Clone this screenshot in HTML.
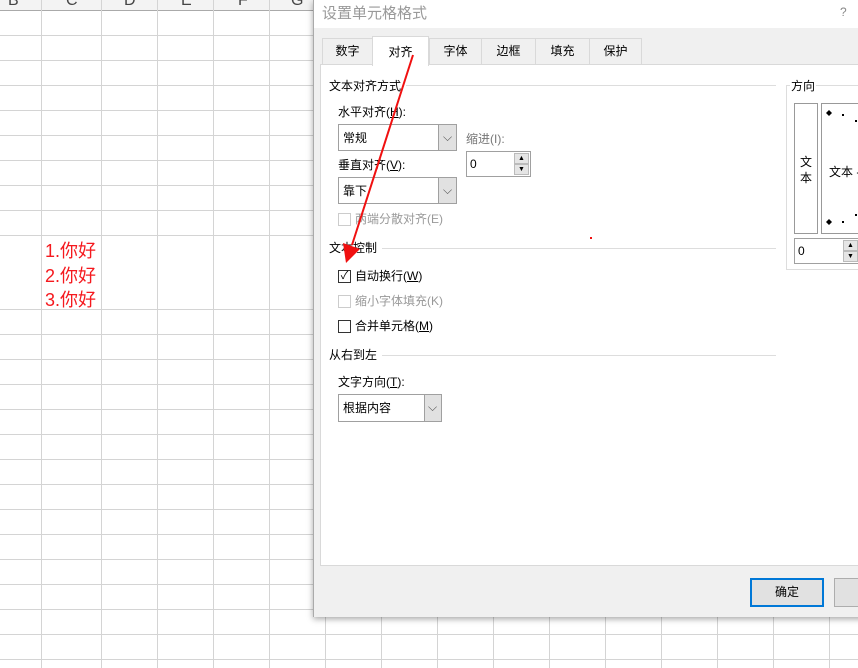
<!DOCTYPE html>
<html><head><meta charset="utf-8"><style>
*{margin:0;padding:0;box-sizing:border-box}
body{width:858px;height:668px;overflow:hidden;background:#fff;position:relative;font-family:"Liberation Sans","Noto Sans CJK SC",sans-serif;font-size:12px;color:#000}
.a{position:absolute}
.hl{position:absolute;height:1px;background:#d4d4d4}
.vl{position:absolute;width:1px;background:#d4d4d4}
.t{position:absolute;white-space:nowrap;line-height:14px}
.sel{position:absolute;background:#fff;border:1px solid #a0a0a0}
.sel .dd{position:absolute;right:0;top:0;bottom:0;width:18px;background:#e1e1e1;border-left:1px solid #a0a0a0}
.cb{position:absolute;width:13px;height:13px;border:1px solid #333;background:#fff}
.cb.d{border-color:#ccc}
.tab{position:absolute;top:38px;height:26px;border:1px solid #d9d9d9;border-bottom:none;text-align:center;line-height:24px;font-size:12px;background:#f0f0f0}
.h{position:absolute;top:-8px;font-size:16px;line-height:18px;color:#444}
</style></head><body>
<div class="a" style="left:0;top:0;width:313px;height:10px;background:#f3f3f3"></div>
<div class="a" style="left:0;top:10px;width:313px;height:1px;background:#aaa"></div>
<div class="h" style="left:8px">B</div>
<div class="h" style="left:66px">C</div>
<div class="h" style="left:124px">D</div>
<div class="h" style="left:181px">E</div>
<div class="h" style="left:238px">F</div>
<div class="h" style="left:291px">G</div>
<div class="vl" style="left:41px;top:0;height:668px"></div>
<div class="vl" style="left:101px;top:0;height:668px"></div>
<div class="vl" style="left:157px;top:0;height:668px"></div>
<div class="vl" style="left:213px;top:0;height:668px"></div>
<div class="vl" style="left:269px;top:0;height:668px"></div>
<div class="vl" style="left:325px;top:617px;height:51px"></div>
<div class="vl" style="left:381px;top:617px;height:51px"></div>
<div class="vl" style="left:437px;top:617px;height:51px"></div>
<div class="vl" style="left:493px;top:617px;height:51px"></div>
<div class="vl" style="left:549px;top:617px;height:51px"></div>
<div class="vl" style="left:605px;top:617px;height:51px"></div>
<div class="vl" style="left:661px;top:617px;height:51px"></div>
<div class="vl" style="left:717px;top:617px;height:51px"></div>
<div class="vl" style="left:773px;top:617px;height:51px"></div>
<div class="vl" style="left:829px;top:617px;height:51px"></div>
<div class="hl" style="left:0;top:35px;width:313px"></div>
<div class="hl" style="left:0;top:60px;width:313px"></div>
<div class="hl" style="left:0;top:85px;width:313px"></div>
<div class="hl" style="left:0;top:110px;width:313px"></div>
<div class="hl" style="left:0;top:135px;width:313px"></div>
<div class="hl" style="left:0;top:160px;width:313px"></div>
<div class="hl" style="left:0;top:185px;width:313px"></div>
<div class="hl" style="left:0;top:210px;width:313px"></div>
<div class="hl" style="left:0;top:235px;width:313px"></div>
<div class="hl" style="left:0;top:309px;width:313px"></div>
<div class="hl" style="left:0;top:334px;width:313px"></div>
<div class="hl" style="left:0;top:359px;width:313px"></div>
<div class="hl" style="left:0;top:384px;width:313px"></div>
<div class="hl" style="left:0;top:409px;width:313px"></div>
<div class="hl" style="left:0;top:434px;width:313px"></div>
<div class="hl" style="left:0;top:459px;width:313px"></div>
<div class="hl" style="left:0;top:484px;width:313px"></div>
<div class="hl" style="left:0;top:509px;width:313px"></div>
<div class="hl" style="left:0;top:534px;width:313px"></div>
<div class="hl" style="left:0;top:559px;width:313px"></div>
<div class="hl" style="left:0;top:584px;width:313px"></div>
<div class="hl" style="left:0;top:609px;width:313px"></div>
<div class="hl" style="left:0;top:634px;width:858px"></div>
<div class="hl" style="left:0;top:659px;width:858px"></div>
<div class="t" style="left:45px;top:239px;font-size:18px;line-height:24.5px;color:#f5191e">1.你好<br>2.你好<br>3.你好</div>
<div class="a" style="left:313px;top:0;width:560px;height:617px;background:#f0f0f0;border-left:1px solid #aaa;box-shadow:0 2px 6px rgba(0,0,0,.35)"></div>
<div class="a" style="left:314px;top:0;width:544px;height:28px;background:#fff"></div>
<div class="t" style="left:322px;top:5px;font-size:15px;line-height:18px;color:#999">设置单元格格式</div>
<div class="t" style="left:840px;top:5px;font-size:12px;color:#888">?</div>
<div class="a" style="left:320px;top:64px;width:545px;height:502px;background:#fff;border:1px solid #d9d9d9"></div>
<div class="tab" style="left:322px;width:51px">数字</div>
<div class="tab" style="left:481px;width:55px">边框</div>
<div class="tab" style="left:429px;width:53px">字体</div>
<div class="tab" style="left:535px;width:55px">填充</div>
<div class="tab" style="left:589px;width:53px">保护</div>
<div class="tab" style="left:372px;top:36px;height:30px;width:57px;background:#fff;line-height:30px;border-color:#d9d9d9">对齐</div>
<div class="t" style="left:329px;top:79px">文本对齐方式</div>
<div class="hl" style="left:406px;top:85px;width:370px;background:#ddd"></div>
<div class="t" style="left:338px;top:105px">水平对齐(<u>H</u>):</div>
<div class="sel" style="left:338px;top:124px;width:119px;height:27px"><div class="dd"></div><div class="t" style="left:4px;top:6px">常规</div><div class="t" style="left:104px;top:5px;color:#555">⌵</div></div>
<div class="t" style="left:466px;top:132px;color:#777">缩进(I):</div>
<div class="sel" style="left:466px;top:151px;width:65px;height:26px"><div class="t" style="left:3px;top:5px">0</div>
<div class="a" style="left:47px;top:1px;width:15px;height:11px;background:#e5e5e5;border:1px solid #bbb;font-size:7px;text-align:center;line-height:9px">▲</div>
<div class="a" style="left:47px;top:12px;width:15px;height:11px;background:#e5e5e5;border:1px solid #bbb;font-size:7px;text-align:center;line-height:9px">▼</div></div>
<div class="t" style="left:338px;top:158px">垂直对齐(<u>V</u>):</div>
<div class="sel" style="left:338px;top:177px;width:119px;height:27px"><div class="dd"></div><div class="t" style="left:4px;top:6px">靠下</div><div class="t" style="left:104px;top:5px;color:#555">⌵</div></div>
<div class="cb d" style="left:338px;top:213px"></div>
<div class="t" style="left:355px;top:212px;color:#999">两端分散对齐(E)</div>
<div class="t" style="left:329px;top:241px">文本控制</div>
<div class="hl" style="left:382px;top:248px;width:394px;background:#ddd"></div>
<div class="cb" style="left:338px;top:270px;font-size:11px;line-height:11px;text-align:center">✓</div>
<div class="t" style="left:355px;top:269px">自动换行(<u>W</u>)</div>
<div class="cb d" style="left:338px;top:295px"></div>
<div class="t" style="left:355px;top:294px;color:#999">缩小字体填充(K)</div>
<div class="cb" style="left:338px;top:320px"></div>
<div class="t" style="left:355px;top:319px">合并单元格(<u>M</u>)</div>
<div class="t" style="left:329px;top:348px">从右到左</div>
<div class="hl" style="left:382px;top:355px;width:394px;background:#ddd"></div>
<div class="t" style="left:338px;top:375px">文字方向(<u>T</u>):</div>
<div class="sel" style="left:338px;top:394px;width:104px;height:28px"><div class="dd" style="width:17px"></div><div class="t" style="left:4px;top:6px">根据内容</div><div class="t" style="left:89px;top:5px;color:#555">⌵</div></div>
<div class="a" style="left:786px;top:85px;width:80px;height:185px;border:1px solid #ddd"></div>
<div class="t" style="left:790px;top:79px;background:#fff;padding:0 1px">方向</div>
<div class="a" style="left:794px;top:103px;width:24px;height:131px;border:1px solid #999"></div>
<div class="t" style="left:800px;top:154px;line-height:16px">文<br>本</div>
<div class="a" style="left:821px;top:103px;width:45px;height:131px;border:1px solid #999"></div>
<div class="t" style="left:829px;top:165px">文本 -</div>
<div class="sel" style="left:794px;top:238px;width:70px;height:26px"><div class="t" style="left:3px;top:5px">0</div>
<div class="a" style="left:48px;top:1px;width:15px;height:11px;background:#e5e5e5;border:1px solid #bbb;font-size:7px;text-align:center;line-height:9px">▲</div>
<div class="a" style="left:48px;top:12px;width:15px;height:11px;background:#e5e5e5;border:1px solid #bbb;font-size:7px;text-align:center;line-height:9px">▼</div></div>
<div class="a" style="left:750px;top:578px;width:74px;height:29px;background:#e1e1e1;border:2px solid #0078d7;text-align:center;line-height:25px">确定</div>
<div class="a" style="left:834px;top:578px;width:40px;height:29px;background:#e1e1e1;border:1px solid #adadad"></div>
<svg class="a" style="left:0;top:0" width="858" height="668">
<polygon points="829,110 832,113 829,116 826,113" fill="#000"/>
<rect x="842" y="114" width="2" height="2" fill="#000"/><rect x="855" y="120" width="2" height="2" fill="#000"/>
<polygon points="829,219 832,222 829,225 826,222" fill="#000"/>
<rect x="842" y="221" width="2" height="2" fill="#000"/><rect x="855" y="214" width="2" height="2" fill="#000"/>
<line x1="413" y1="55" x2="352" y2="245" stroke="#f01010" stroke-width="2"/>
<polygon points="346,263 343,243 360,249" fill="#f01010"/>
<rect x="590" y="237" width="2" height="2" fill="#f01010"/>
</svg>
</body></html>
